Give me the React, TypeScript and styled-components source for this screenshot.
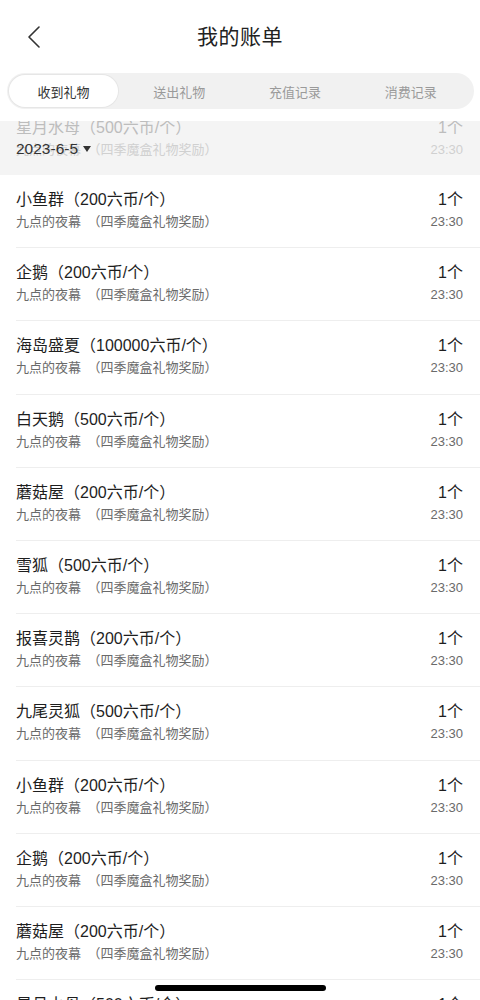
import styled, { createGlobalStyle } from "styled-components";

const GlobalStyle = createGlobalStyle`
  html, body {
    margin: 0;
    padding: 0;
    background: #ffffff;
  }
  body {
    font-family: "Liberation Sans", "Noto Sans CJK SC", sans-serif;
    color: #222;
  }
`;

type Bill = {
  name: string;
  from: string;
  count: string;
  time: string;
};

const bills: Bill[] = [
  { name: "小鱼群（200六币/个）", from: "九点的夜幕", count: "1个", time: "23:30" },
  { name: "企鹅（200六币/个）", from: "九点的夜幕", count: "1个", time: "23:30" },
  { name: "海岛盛夏（100000六币/个）", from: "九点的夜幕", count: "1个", time: "23:30" },
  { name: "白天鹅（500六币/个）", from: "九点的夜幕", count: "1个", time: "23:30" },
  { name: "蘑菇屋（200六币/个）", from: "九点的夜幕", count: "1个", time: "23:30" },
  { name: "雪狐（500六币/个）", from: "九点的夜幕", count: "1个", time: "23:30" },
  { name: "报喜灵鹊（200六币/个）", from: "九点的夜幕", count: "1个", time: "23:30" },
  { name: "九尾灵狐（500六币/个）", from: "九点的夜幕", count: "1个", time: "23:30" },
  { name: "小鱼群（200六币/个）", from: "九点的夜幕", count: "1个", time: "23:30" },
  { name: "企鹅（200六币/个）", from: "九点的夜幕", count: "1个", time: "23:30" },
  { name: "蘑菇屋（200六币/个）", from: "九点的夜幕", count: "1个", time: "23:30" },
  { name: "星月水母（500六币/个）", from: "九点的夜幕", count: "1个", time: "23:30" },
];

const tabs = ["收到礼物", "送出礼物", "充值记录", "消费记录"];

export default function App() {
  return (
    <>
      <GlobalStyle />
      <Page>
        <Header>
          <BackButton aria-label="返回">
            <svg width="14" height="22" viewBox="0 0 14 22" fill="none">
              <polyline
                points="12,1 2,11 12,21"
                stroke="#333"
                strokeWidth="1.6"
                strokeLinecap="round"
                strokeLinejoin="round"
              />
            </svg>
          </BackButton>
          <Title>我的账单</Title>
          <span />
        </Header>

        <TabBar>
          {tabs.map((t, i) => (
            <Tab key={t} $active={i === 0}>
              {t}
            </Tab>
          ))}
        </TabBar>

        <List>
          <StickyDate>
            <Row $bare>
              <Left>
                <Name $faded>星月水母（500六币/个）</Name>
                <Sub $faded>九点的夜幕　（四季魔盒礼物奖励）</Sub>
              </Left>
              <Right>
                <Count $faded>1个</Count>
                <Time $faded>23:30</Time>
              </Right>
            </Row>
            <DatePicker>
              2023-6-5
              <Caret />
            </DatePicker>
          </StickyDate>

          {bills.map((b, i) => (
            <Row key={i}>
              <Left>
                <Name>{b.name}</Name>
                <Sub>{b.from}　（四季魔盒礼物奖励）</Sub>
              </Left>
              <Right>
                <Count>{b.count}</Count>
                <Time>{b.time}</Time>
              </Right>
            </Row>
          ))}
        </List>

        <HomeIndicator />
      </Page>
    </>
  );
}

const Page = styled.div`
  width: 480px;
  height: 1000px;
  overflow: hidden;
  background: #fff;
`;

const Header = styled.header`
  display: grid;
  grid-template-columns: 60px 1fr 60px;
  align-items: center;
  height: 73px;
`;

const BackButton = styled.button`
  display: flex;
  align-items: center;
  justify-content: flex-start;
  padding: 0 0 0 27px;
  margin: 0;
  height: 40px;
  border: none;
  background: none;
`;

const Title = styled.h1`
  margin: 0;
  text-align: center;
  font-size: 21px;
  font-weight: 400;
  line-height: 28px;
  color: #222;
  letter-spacing: 0.5px;
`;

const TabBar = styled.nav`
  display: grid;
  grid-template-columns: repeat(4, 1fr);
  margin: 0 6px 0 7px;
  padding: 2px;
  height: 32px;
  background: #f1f1f1;
  border-radius: 18px;
`;

const Tab = styled.div<{ $active?: boolean }>`
  display: flex;
  align-items: center;
  justify-content: center;
  width: 109px;
  font-size: 13px;
  border-radius: 16px;
  color: ${(p) => (p.$active ? "#333" : "#9a9a9a")};
  background: ${(p) => (p.$active ? "#fff" : "transparent")};
  box-shadow: ${(p) => (p.$active ? "0 0 0 1px #e6e6e6" : "none")};
`;

const List = styled.div`
  margin-top: 12px;
`;

const StickyDate = styled.div`
  position: relative;
  height: 54px;
  overflow: hidden;
  background: #f4f4f4;
`;

const DatePicker = styled.div`
  position: absolute;
  left: 16px;
  top: 18px;
  display: flex;
  align-items: center;
  gap: 5px;
  font-size: 15.5px;
  line-height: 20px;
  color: #333;
`;

const Caret = styled.span`
  width: 0;
  height: 0;
  border-left: 4.5px solid transparent;
  border-right: 4.5px solid transparent;
  border-top: 6px solid #333;
`;

const Row = styled.div<{ $bare?: boolean }>`
  display: flex;
  justify-content: space-between;
  align-items: flex-start;
  margin-left: 16px;
  padding: ${(p) => (p.$bare ? "0 17px 0 0" : "14px 17px 16.2px 0")};
  margin-top: ${(p) => (p.$bare ? "-4px" : "0")};
  border-bottom: ${(p) => (p.$bare ? "none" : "1px solid #eeeeee")};
`;

const Left = styled.div`
  display: flex;
  flex-direction: column;
  gap: 2px;
`;

const Right = styled.div`
  display: flex;
  flex-direction: column;
  align-items: flex-end;
  gap: 2px;
`;

const Name = styled.div<{ $faded?: boolean }>`
  font-size: 16px;
  line-height: 22px;
  color: ${(p) => (p.$faded ? "#bdbdbd" : "#1e1e1e")};
`;

const Sub = styled.div<{ $faded?: boolean }>`
  font-size: 13px;
  line-height: 18px;
  color: ${(p) => (p.$faded ? "#d0d0d0" : "#6a6a6a")};
`;

const Count = styled(Name)``;

const Time = styled(Sub)``;

const HomeIndicator = styled.div`
  position: fixed;
  left: 155px;
  bottom: 9px;
  width: 171px;
  height: 6px;
  border-radius: 3px;
  background: #000;
`;
